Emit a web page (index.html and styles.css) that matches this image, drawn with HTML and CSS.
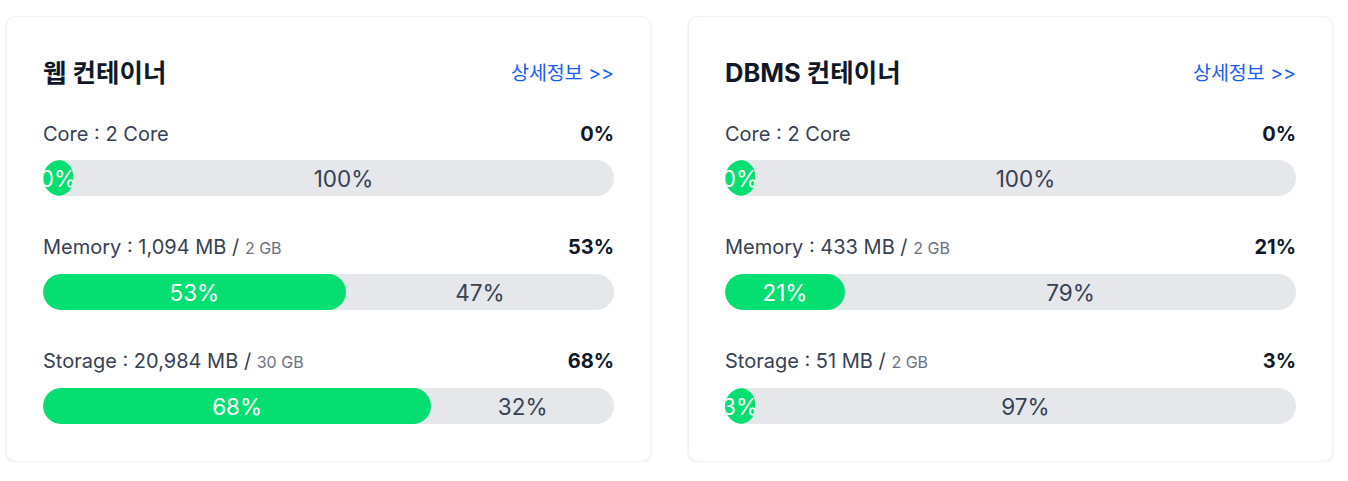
FILE: index.html
```html
<!DOCTYPE html>
<html lang="ko">
<head>
<meta charset="utf-8">
<title>컨테이너</title>
<link rel="stylesheet" href="styles.css">
</head>
<body>
<div class="grid">
  <section class="card">
    <div class="card-head">
      <h2 class="title">웹 컨테이너</h2>
      <a class="more" href="#">상세정보 &gt;&gt;</a>
    </div>
    <div class="metric">
      <div class="metric-head">
        <span class="label">Core : 2 Core</span>
        <span class="pct">0%</span>
      </div>
      <div class="bar">
        <div class="used" style="width:0%"><span>0%</span></div>
        <div class="free"><span>100%</span></div>
      </div>
    </div>
    <div class="metric">
      <div class="metric-head">
        <span class="label">Memory : 1,094 MB / <small>2 GB</small></span>
        <span class="pct">53%</span>
      </div>
      <div class="bar">
        <div class="used" style="width:53%"><span>53%</span></div>
        <div class="free"><span>47%</span></div>
      </div>
    </div>
    <div class="metric">
      <div class="metric-head">
        <span class="label">Storage : 20,984 MB / <small>30 GB</small></span>
        <span class="pct">68%</span>
      </div>
      <div class="bar">
        <div class="used" style="width:68%"><span>68%</span></div>
        <div class="free"><span>32%</span></div>
      </div>
    </div>
  </section>
  <section class="card">
    <div class="card-head">
      <h2 class="title">DBMS 컨테이너</h2>
      <a class="more" href="#">상세정보 &gt;&gt;</a>
    </div>
    <div class="metric">
      <div class="metric-head">
        <span class="label">Core : 2 Core</span>
        <span class="pct">0%</span>
      </div>
      <div class="bar">
        <div class="used" style="width:0%"><span>0%</span></div>
        <div class="free"><span>100%</span></div>
      </div>
    </div>
    <div class="metric">
      <div class="metric-head">
        <span class="label">Memory : 433 MB / <small>2 GB</small></span>
        <span class="pct">21%</span>
      </div>
      <div class="bar">
        <div class="used" style="width:21%"><span>21%</span></div>
        <div class="free"><span>79%</span></div>
      </div>
    </div>
    <div class="metric">
      <div class="metric-head">
        <span class="label">Storage : 51 MB / <small>2 GB</small></span>
        <span class="pct">3%</span>
      </div>
      <div class="bar">
        <div class="used" style="width:3%"><span>3%</span></div>
        <div class="free"><span>97%</span></div>
      </div>
    </div>
  </section>
</div>
</body>
</html>
```

FILE: styles.css
```css
* { box-sizing: border-box; }
html, body { margin: 0; padding: 0; background: #ffffff; }
body {
  font-family: Inter, "Noto Sans CJK KR", sans-serif;
  color: #364153;
}
.grid {
  display: grid;
  grid-template-columns: 645px 645px;
  column-gap: 37px;
  padding: 16px 0 0 6px;
}
.card {
  background: #fff;
  border: 1px solid #f1f2f4;
  border-radius: 10px;
  box-shadow: 0 1px 3px rgba(0,0,0,0.09);
  padding: 36px;
  height: 446px;
}
.card-head {
  display: flex;
  justify-content: space-between;
  align-items: center;
  height: 40px;
  margin-bottom: 27px;
}
.title {
  margin: 0;
  font-size: 25.5px;
  font-weight: 700;
  color: #101828;
  line-height: 32px;
}
.more {
  color: #155dfc;
  text-decoration: none;
  font-size: 19.5px;
  line-height: 28px;
}
.metric + .metric { margin-top: 37px; }
.metric-head {
  display: flex;
  justify-content: space-between;
  align-items: baseline;
  line-height: 28px;
  margin-bottom: 12px;
}
.label { font-size: 20px; color: #364153; }
.label small { font-size: 16px; color: #6a7282; }
.pct { font-size: 20px; font-weight: 700; color: #101828; }
.bar {
  display: flex;
  height: 36px;
  border-radius: 18px;
  background: #e5e7eb;
  overflow: hidden;
}
.used {
  min-width: 30px;
  background: #05df72;
  border-radius: 18px;
  color: #fff;
  display: flex;
  justify-content: center;
  align-items: center;
  overflow: hidden;
  font-size: 22.5px;
  white-space: nowrap;
}
.free {
  flex: 1;
  display: flex;
  justify-content: center;
  align-items: center;
  font-size: 22.5px;
  color: #364153;
  white-space: nowrap;
}
```
